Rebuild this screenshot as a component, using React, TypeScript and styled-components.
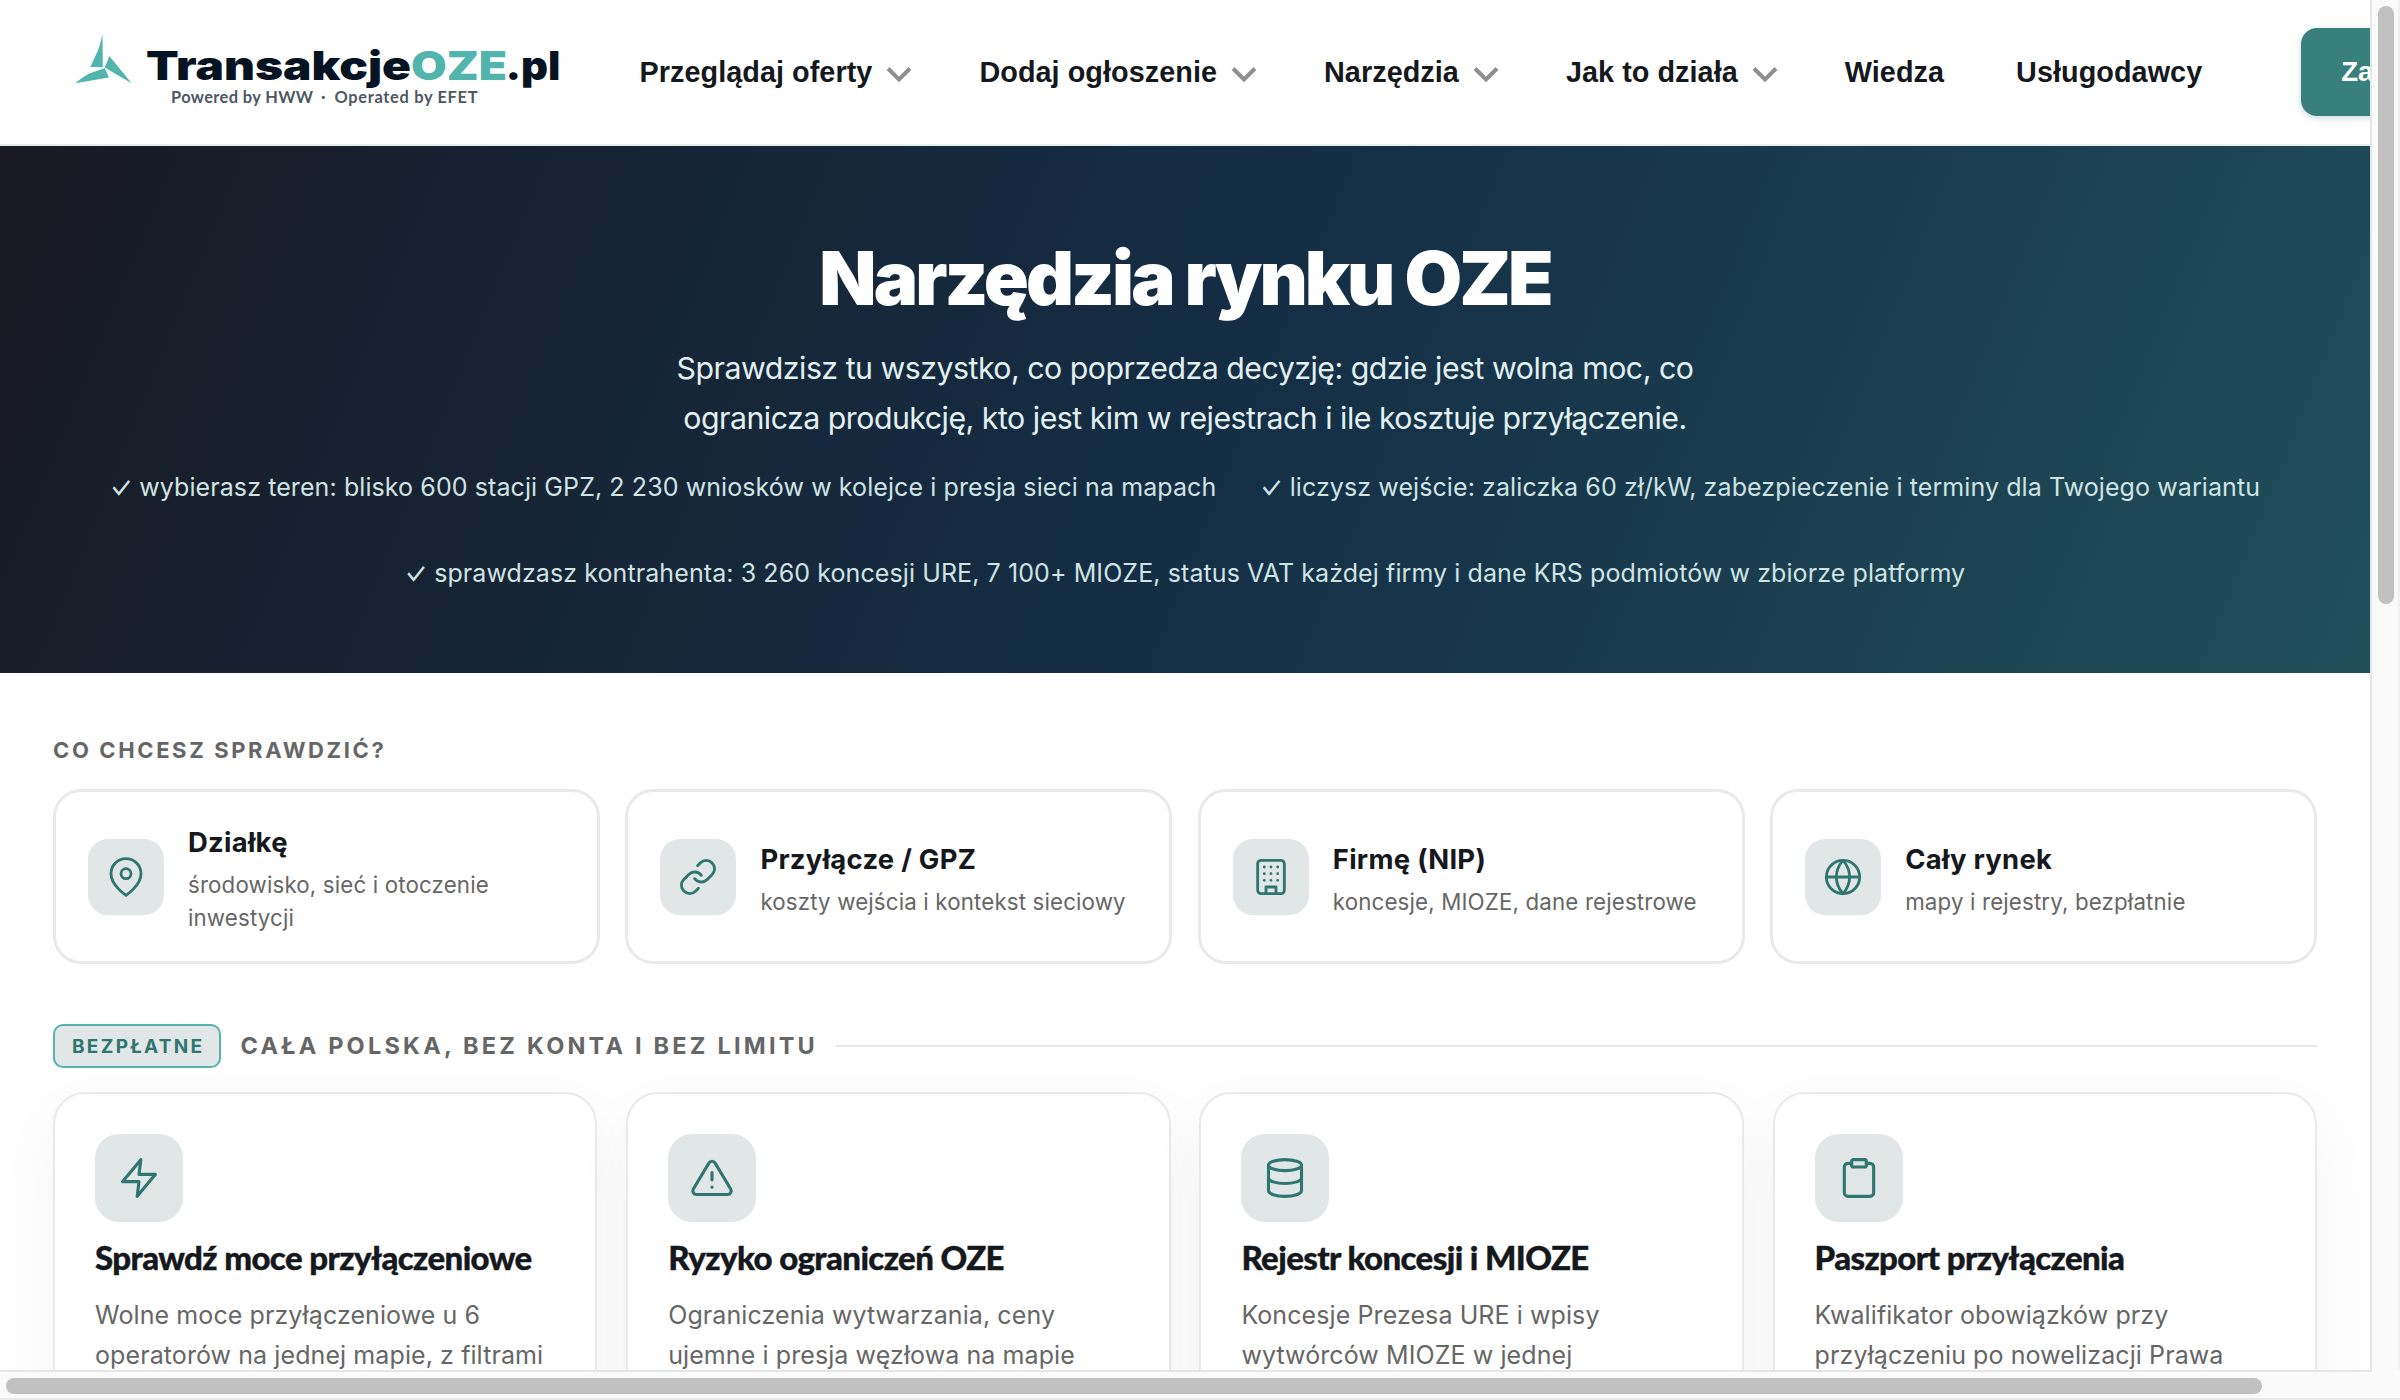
import React from 'react';
import styled, { createGlobalStyle } from 'styled-components';

const sans = '"Inter", "Liberation Sans", sans-serif';
const teal = '#2f7570';
const line = '#e8e9ea';

const GlobalStyle = createGlobalStyle`
  *, *::before, *::after { box-sizing: border-box; }
  body { margin: 0; background: #fff; overflow: hidden; }
  h1, h2, h3, p, ul { margin: 0; padding: 0; }
`;

const Window = styled.div`
  width: 2400px;
  height: 1400px;
  display: grid;
  grid-template: 1370px 30px / 2370px 30px;
  overflow: hidden;
  background: #fafafa;
  font-family: ${sans};
  font-kerning: normal;
`;

const Page = styled.div`
  overflow: hidden;
  background: #fefefe;
`;

const VerticalTrack = styled.div`
  border-left: 2px solid #e6e6e6;
  border-right: 2px solid #f1f1f1;
  padding: 6px 4px 0 6px;
`;

const HorizontalTrack = styled.div`
  grid-column: 1 / 3;
  position: relative;
  border-bottom: 2px solid #eaeaea;
  padding: 8px 0 0 6px;
  &::before {
    content: '';
    position: absolute;
    left: 0;
    top: 0;
    width: 2372px;
    height: 2px;
    background: #e6e6e6;
  }
`;

const Thumb = styled.div<{ $vertical?: boolean }>`
  width: ${p => (p.$vertical ? '16px' : '2256px')};
  height: ${p => (p.$vertical ? '598px' : '16px')};
  border-radius: 8px;
  background: #c1c1c1;
`;

const Header = styled.header`
  height: 146px;
  display: flex;
  background: #fff;
  border-bottom: 2px solid #e6efec;
`;

const Logo = styled.svg`
  flex: none;
  width: 500px;
  height: 120px;
  margin-left: 70px;
`;

const Nav = styled.nav`
  flex: none;
  display: flex;
  align-items: center;
  height: 144px;
  padding-left: 69.5px;
  gap: 67px;
`;

const NavLink = styled.a<{ $plain?: boolean }>`
  flex: none;
  display: flex;
  align-items: center;
  gap: 14px;
  margin-right: ${p => (p.$plain ? '5px' : '0')};
  color: #15181c;
  font: 700 28.8px/40px "Liberation Sans", Arial, sans-serif;
  letter-spacing: 0.05px;
  white-space: nowrap;
`;

const Chevron = styled.svg`
  width: 26px;
  height: 18px;
  margin-top: 6px;
`;

const SignIn = styled.a`
  flex: none;
  display: flex;
  align-items: center;
  height: 88px;
  margin: 28px 0 0 94px;
  padding: 0 40px;
  border-radius: 16px;
  background: #397f7b;
  box-shadow: 0 2px 6px rgba(20, 80, 90, 0.22);
  color: #fff;
  font: 700 27.6px/40px "Liberation Sans", Arial, sans-serif;
  white-space: nowrap;
`;

const Hero = styled.section`
  height: 527px;
  padding-top: 87px;
  display: flex;
  flex-direction: column;
  align-items: center;
  text-align: center;
  background: linear-gradient(112deg, #191a23 0%, #142e46 52%, #204f5a 100%);
`;

const HeroTitle = styled.h1`
  color: #fff;
  font: 900 74.4px/90px ${sans};
  letter-spacing: -2.9px;
`;

const HeroLead = styled.p`
  width: 1100px;
  margin-top: 20px;
  color: #e2f0f0;
  font: 400 30.3px/50px ${sans};
  letter-spacing: -0.5px;
`;

const Points = styled.ul`
  display: flex;
  flex-wrap: wrap;
  justify-content: center;
  width: 2264px;
  margin-top: 23px;
  gap: 44px;
  list-style: none;
`;

const Point = styled.li`
  color: #cfe3e3;
  font: 400 25px/42px ${sans};
  letter-spacing: 0.09px;
  white-space: nowrap;
`;

const Tick = styled.span`
  display: inline-block;
  transform: scaleY(1.25);
`;

const Main = styled.main`
  padding: 62px 53px 0;
`;

const Eyebrow = styled.h2`
  color: #666;
  font: 700 22px/30px ${sans};
  letter-spacing: 2.62px;
`;

const QuickGrid = styled.div`
  display: grid;
  grid-template-columns: repeat(4, 1fr);
  gap: 25.6px;
  margin-top: 24px;
`;

const QuickCard = styled.a`
  display: flex;
  align-items: center;
  gap: 24px;
  height: 175px;
  padding: 0 32px;
  border: 3px solid ${line};
  border-radius: 28px;
  background: #fff;
`;

const IconTile = styled.span<{ $large?: boolean }>`
  flex: none;
  display: grid;
  place-items: center;
  width: ${p => (p.$large ? 88 : 76)}px;
  height: ${p => (p.$large ? 88 : 76)}px;
  border-radius: ${p => (p.$large ? 24 : 20)}px;
  background: #e1e7e7;
  color: ${teal};
  svg {
    width: ${p => (p.$large ? 44 : 40)}px;
    height: ${p => (p.$large ? 44 : 40)}px;
    overflow: visible;
  }
`;

const QuickText = styled.div`
  padding-top: 5px;
`;

const QuickTitle = styled.h3`
  color: #15181c;
  font: 700 27.4px/36px ${sans};
  letter-spacing: 0.28px;
`;

const QuickNote = styled.p`
  margin-top: 8px;
  color: #666;
  font: 400 22.3px/33px ${sans};
  letter-spacing: 0.15px;
`;

const GroupHead = styled.div`
  display: flex;
  align-items: center;
  height: 44px;
  margin-top: 60px;
`;

const Badge = styled.span`
  height: 44px;
  padding: 0 15px 0 17px;
  border: 2px solid #55b3ab;
  border-radius: 10px;
  background: #e1e7e7;
  color: ${teal};
  font: 700 19px/41px ${sans};
  letter-spacing: 2.3px;
`;

const GroupTitle = styled.h2`
  margin: 0 18px 0 19px;
  color: #666;
  font: 700 23.5px/44px ${sans};
  letter-spacing: 3.22px;
`;

const Rule = styled.span`
  flex: 1;
  height: 2px;
  background: ${line};
`;

const ToolGrid = styled.div`
  display: grid;
  grid-template-columns: repeat(4, 1fr);
  gap: 28.8px;
  margin-top: 24px;
`;

const ToolCard = styled.article`
  height: 480px;
  padding: 40px;
  border: 2px solid ${line};
  border-radius: 32px;
  background: #fff;
  box-shadow: 0 24px 64px rgba(20, 24, 28, 0.045);
`;

const ToolTitle = styled.h3`
  margin-top: 15px;
  color: #15181c;
  font: 900 33px/40px "Lato", sans-serif;
  letter-spacing: -0.61px;
  -webkit-text-stroke: 0.4px #15181c;
  white-space: nowrap;
`;

const ToolText = styled.p`
  margin-top: 17.5px;
  color: #666;
  font: 400 25px/40.8px ${sans};
  letter-spacing: 0.09px;
`;

const glyphs: Record<string, React.ReactNode> = {
  pin: (<><path d="M21 10c0 7-9 13-9 13s-9-6-9-13a9 9 0 0 1 18 0z" /><circle cx="12" cy="10" r="3" /></>),
  link: (<><path d="M10 13a5 5 0 0 0 7.54.54l3-3a5 5 0 0 0-7.07-7.07l-1.72 1.71" /><path d="M14 11a5 5 0 0 0-7.54-.54l-3 3a5 5 0 0 0 7.07 7.07l1.71-1.71" /></>),
  building: (<><rect x="4" y="2" width="16" height="20" rx="2" /><path d="M9 22v-4h6v4M8 6h.01M16 6h.01M12 6h.01M12 10h.01M12 14h.01M16 10h.01M16 14h.01M8 10h.01M8 14h.01" /></>),
  globe: (<><circle cx="12" cy="12" r="10" /><path d="M2 12h20M12 2a15.3 15.3 0 0 1 4 10 15.3 15.3 0 0 1-4 10 15.3 15.3 0 0 1-4-10 15.3 15.3 0 0 1 4-10z" /></>),
  bolt: <path d="M13 2 3 14h9l-1 8 10-12h-9l1-8z" />,
  alert: (<><path d="M10.29 3.86 1.82 18a2 2 0 0 0 1.71 3h16.94a2 2 0 0 0 1.71-3L13.71 3.86a2 2 0 0 0-3.42 0z" /><path d="M12 9v4M12 17h.01" /></>),
  database: (<><ellipse cx="12" cy="5" rx="9" ry="3" /><path d="M21 12c0 1.66-4 3-9 3s-9-1.34-9-3" /><path d="M3 5v14c0 1.66 4 3 9 3s9-1.34 9-3V5" /></>),
  clipboard: (<><path d="M16 4h2a2 2 0 0 1 2 2v14a2 2 0 0 1-2 2H6a2 2 0 0 1-2-2V6a2 2 0 0 1 2-2h2" /><rect x="8" y="2" width="8" height="4" rx="1" /></>),
};

const Icon = ({ name }: { name: string }) => (
  <svg viewBox="0 0 24 24" fill="none" stroke="currentColor" strokeWidth="1.7" strokeLinecap="round" strokeLinejoin="round">
    {glyphs[name]}
  </svg>
);

const links: { label: string; menu?: boolean }[] = [
  { label: 'Przeglądaj oferty', menu: true },
  { label: 'Dodaj ogłoszenie', menu: true },
  { label: 'Narzędzia', menu: true },
  { label: 'Jak to działa', menu: true },
  { label: 'Wiedza' },
  { label: 'Usługodawcy' },
];

const points = [
  'wybierasz teren: blisko 600 stacji GPZ, 2 230 wniosków w kolejce i presja sieci na mapach',
  'liczysz wejście: zaliczka 60 zł/kW, zabezpieczenie i terminy dla Twojego wariantu',
  'sprawdzasz kontrahenta: 3 260 koncesji URE, 7 100+ MIOZE, status VAT każdej firmy i dane KRS podmiotów w zbiorze platformy',
];

const quick = [
  { icon: 'pin', title: 'Działkę', note: 'środowisko, sieć i otoczenie inwestycji' },
  { icon: 'link', title: 'Przyłącze / GPZ', note: 'koszty wejścia i kontekst sieciowy' },
  { icon: 'building', title: 'Firmę (NIP)', note: 'koncesje, MIOZE, dane rejestrowe' },
  { icon: 'globe', title: 'Cały rynek', note: 'mapy i rejestry, bezpłatnie' },
];

const tools = [
  { icon: 'bolt', title: 'Sprawdź moce przyłączeniowe', text: 'Wolne moce przyłączeniowe u 6 operatorów na jednej mapie, z filtrami' },
  { icon: 'alert', title: 'Ryzyko ograniczeń OZE', text: 'Ograniczenia wytwarzania, ceny ujemne i presja węzłowa na mapie' },
  { icon: 'database', title: 'Rejestr koncesji i MIOZE', text: 'Koncesje Prezesa URE i wpisy wytwórców MIOZE w jednej' },
  { icon: 'clipboard', title: 'Paszport przyłączenia', text: 'Kwalifikator obowiązków przy przyłączeniu po nowelizacji Prawa' },
];

const Brand = () => (
  <Logo viewBox="70 0 500 120">
    <g fill="#52b5ad">
      <path d="M102.5 34Q99.5 48 96.5 53.5L90.3 67L102.8 67.2Z" />
      <path d="M109.4 56L131.6 83.3Q119 76 104.6 67.6Z" />
      <path d="M75.3 83.2Q86 74.500 92 72.600L104.800 68.300L109 77.400Z" />
    </g>
    <g fontFamily="Inter, sans-serif" fontWeight="900" fontSize="39.6" fill="#061322">
      <text x="146" y="80" textLength="265" lengthAdjust="spacingAndGlyphs">Transakcje</text>
      <text x="411" y="80" textLength="96" lengthAdjust="spacingAndGlyphs" fill="#52b5ad">OZE</text>
      <text x="505.500" y="80" textLength="55" lengthAdjust="spacingAndGlyphs">.pl</text>
    </g>
    <g fontFamily="Lato, sans-serif" fontWeight="700" fontSize="16.4" fill="#4e5762">
      <text x="171" y="103" textLength="142" lengthAdjust="spacing">Powered by HWW</text>
      <text x="321" y="103">·</text>
      <text x="334.500" y="103" textLength="143" lengthAdjust="spacing">Operated by EFET</text>
    </g>
  </Logo>
);

export default function App() {
  return (
    <>
      <GlobalStyle />
      <Window>
        <Page>
          <Header>
            <Brand />
            <Nav>
              {links.map(l => (
                <NavLink key={l.label} $plain={!l.menu}>
                  {l.label}
                  {l.menu && (
                    <Chevron viewBox="0 0 26 18" fill="none" stroke="#8d8f91" strokeWidth="4">
                      <path d="M2 2.500 13 13.500 24 2.500" />
                    </Chevron>
                  )}
                </NavLink>
              ))}
            </Nav>
            <SignIn>Zaloguj się</SignIn>
          </Header>
          <Hero>
            <HeroTitle>Narzędzia rynku OZE</HeroTitle>
            <HeroLead>
              Sprawdzisz tu wszystko, co poprzedza decyzję: gdzie jest wolna moc, co
              ogranicza produkcję, kto jest kim w rejestrach i ile kosztuje przyłączenie.
            </HeroLead>
            <Points>
              {points.map(p => <Point key={p}><Tick>✓</Tick> {p}</Point>)}
            </Points>
          </Hero>
          <Main>
            <Eyebrow>CO CHCESZ SPRAWDZIĆ?</Eyebrow>
            <QuickGrid>
              {quick.map(q => (
                <QuickCard key={q.title}>
                  <IconTile><Icon name={q.icon} /></IconTile>
                  <QuickText>
                    <QuickTitle>{q.title}</QuickTitle>
                    <QuickNote>{q.note}</QuickNote>
                  </QuickText>
                </QuickCard>
              ))}
            </QuickGrid>
            <GroupHead>
              <Badge>BEZPŁATNE</Badge>
              <GroupTitle>CAŁA POLSKA, BEZ KONTA I BEZ LIMITU</GroupTitle>
              <Rule />
            </GroupHead>
            <ToolGrid>
              {tools.map(t => (
                <ToolCard key={t.title}>
                  <IconTile $large><Icon name={t.icon} /></IconTile>
                  <ToolTitle>{t.title}</ToolTitle>
                  <ToolText>{t.text}</ToolText>
                </ToolCard>
              ))}
            </ToolGrid>
          </Main>
        </Page>
        <VerticalTrack><Thumb $vertical /></VerticalTrack>
        <HorizontalTrack><Thumb /></HorizontalTrack>
      </Window>
    </>
  );
}
